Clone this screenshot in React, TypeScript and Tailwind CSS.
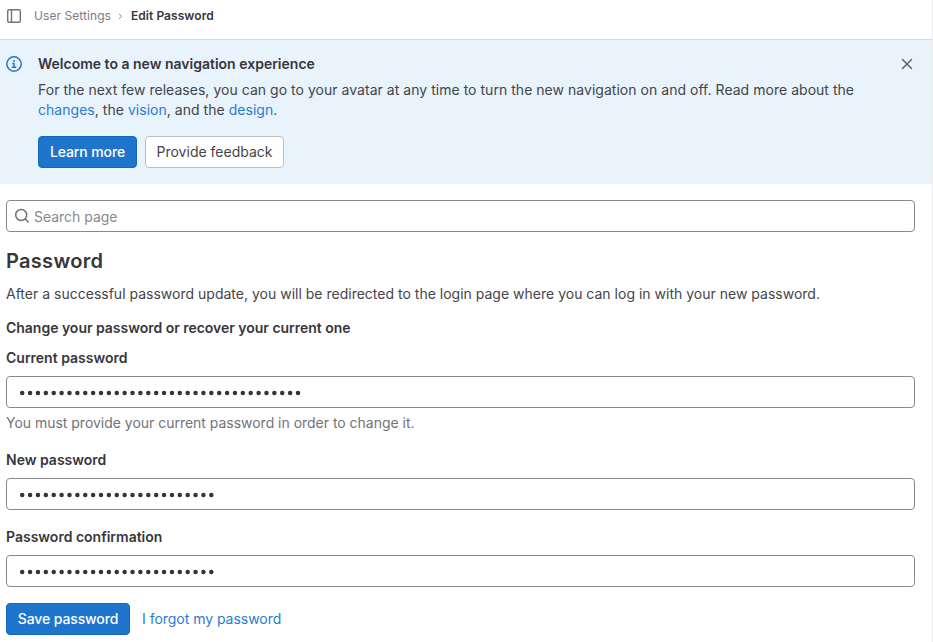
import React from "react";

function PasswordField({ label, dots, hint, className }: { label: string; dots: number; hint?: string; className: string }) {
  return (
    <div className={className}>
      <label className="block h-5 font-semibold">{label}</label>
      <div className="mt-2 flex h-8 w-[909px] items-center rounded border border-[#89888d] bg-white px-[11px]">
        <svg width={dots * 8} height="8" fill="#333238">
          {Array.from({ length: dots }, (_, i) => (
            <circle key={i} cx={4.2 + i * 7.88} cy="5" r="2.25" />
          ))}
        </svg>
      </div>
      {hint && <p className="mt-[5px] h-5 tracking-[-0.02px] text-[#737278]">{hint}</p>}
    </div>
  );
}

export default function App() {
  return (
    <div className="flex h-[642px] w-[933px] flex-col overflow-hidden border-r border-[#ececef] bg-white font-['Inter',sans-serif] text-[14px] leading-5 text-[#37363c]">
      <header className="flex h-10 items-start border-b border-[#d5dade] pl-[6px] text-[12px] leading-4">
        <svg className="mt-2" width="16" height="16" viewBox="0 0 16 16" fill="none" stroke="#737278" strokeWidth="1.4">
          <rect x="1.7" y="1.7" width="12.6" height="12.6" rx="1.3" />
          <path d="M5.5 2v12" />
        </svg>
        <span className="ml-3 mt-2 tracking-[0.07px] text-[#7d7c82]">User Settings</span>
        <svg className="ml-[7px] mt-3 " width="5" height="9" viewBox="0 0 5 9" fill="none" stroke="#89888d">
          <path d="m1 1.8 2.6 2.6L1 7" />
        </svg>
        <span className="ml-2 mt-2 font-semibold tracking-[0.05px]">Edit Password</span>
      </header>
      <section className="flex h-36 w-[932px] items-start bg-[#e8f3fc] pl-[6px] pt-4">
        <svg width="16" height="16" viewBox="0 0 16 16" fill="none" stroke="#1f75cb" strokeWidth="1.5">
          <circle cx="8" cy="8" r="7.2" />
          <path d="M6.3 7.5H8v3.6M5.8 11.2h4.4" />
          <circle cx="8" cy="4.9" r="1" fill="#1f75cb" stroke="none" />
        </svg>
        <div className="ml-4 w-[853px]">
          <h2 className="-mt-0.5 font-semibold">Welcome to a new navigation experience</h2>
          <p className="mt-1.5 tracking-[0.031px] text-[#45444b]">
            For the next few releases, you can go to your avatar at any time to turn the new navigation on and off. Read more about the <a className="text-[#2b7cd1]">changes</a>, the <a className="text-[#2b7cd1]">vision</a>, and the <a className="text-[#2b7cd1]">design</a>.
          </p>
          <div className="mt-4 flex gap-2">
            <button className="h-8 w-[99px] rounded border border-[#1068bf] bg-[#1f75cb] font-medium tracking-[-0.1px] text-white">Learn more</button>
            <button className="h-8 w-[139px] rounded border border-[#bfbfc3] bg-white text-[#45444b]">Provide feedback</button>
          </div>
        </div>
        <svg className="ml-2" width="16" height="16" fill="none" stroke="#626168" strokeWidth="1.5" strokeLinecap="round">
          <path d="m3.5 3.5 9 9m0-9-9 9" />
        </svg>
      </section>
      <main className="px-[6px]">
        <div className="mt-4 flex h-8 w-[909px] items-center rounded border border-[#89888d] px-[7px] text-[#89888d]">
          <svg width="16" height="16" fill="none" stroke="#737278" strokeWidth="1.5" strokeLinecap="round">
            <circle cx="7.2" cy="7" r="5.5" />
            <path d="m11.2 11 3 3" />
          </svg>
          <span className="ml-1 pt-0.5 tracking-[-0.02px]">Search page</span>
        </div>
        <h1 className="mt-[17px] text-[20px] font-semibold leading-6 tracking-[0.3px]">Password</h1>
        <p className="mt-[11px] tracking-[0.006px] text-[#45444b]">After a successful password update, you will be redirected to the login page where you can log in with your new password.</p>
        <h3 className="mt-[14px] font-semibold tracking-[-0.02px]">Change your password or recover your current one</h3>
        <PasswordField className="mt-[10px]" label="Current password" dots={36} hint="You must provide your current password in order to change it." />
        <PasswordField className="mt-[17px]" label="New password" dots={25} />
        <PasswordField className="mt-[17px]" label="Password confirmation" dots={25} />
        <div className="mt-4 flex items-center">
          <button className="h-8 w-[124px] rounded border border-[#1068bf] bg-[#1f75cb] font-medium tracking-[-0.12px] text-white">Save password</button>
          <a className="ml-3 tracking-[-0.03px] text-[#2b7cd1]">I forgot my password</a>
        </div>
      </main>
    </div>
  );
}
